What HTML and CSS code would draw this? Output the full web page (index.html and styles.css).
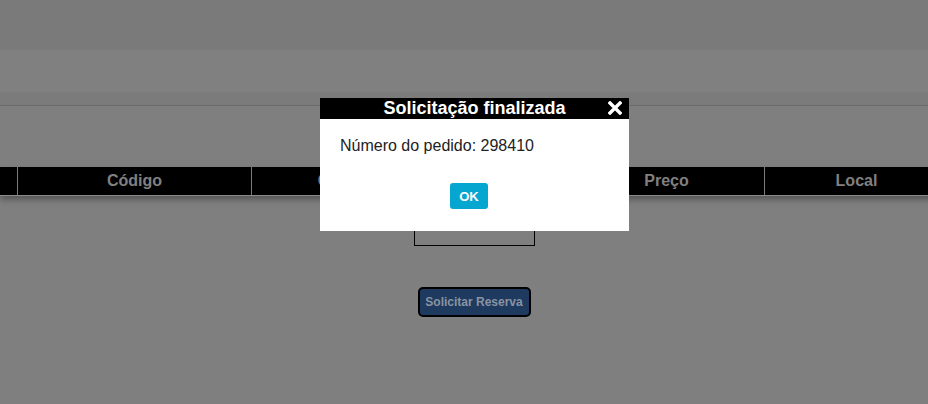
FILE: index.html
```html
<!DOCTYPE html>
<html lang="pt-BR">
<head>
<meta charset="utf-8">
<title>Reserva</title>
<link rel="stylesheet" href="styles.css">
</head>
<body>
<div class="page">
  <div class="top-band"></div>
  <div class="nav-band"></div>
  <div class="sub-band"></div>

  <div class="table-head">
    <div class="col col-check"></div>
    <div class="col col-code">Código</div>
    <div class="col col-a">Cor</div>
    <div class="col col-b">Cidade</div>
    <div class="col col-price">Preço</div>
    <div class="col col-local">Local</div>
  </div>

  <div class="empty-box"></div>

  <div class="actions">
    <button class="btn-reserve" type="button">Solicitar Reserva</button>
  </div>

  <div class="modal">
    <div class="modal-title">
      <span>Solicitação finalizada</span>
      <svg class="close" width="14" height="14" viewBox="0 0 14 14" aria-hidden="true">
        <path d="M2 2 L12 12 M12 2 L2 12" stroke="#fff" stroke-width="3.4" stroke-linecap="square"/>
      </svg>
    </div>
    <div class="modal-body">Número do pedido: 298410</div>
    <div class="modal-footer">
      <button class="btn-ok" type="button">OK</button>
    </div>
  </div>
</div>
</body>
</html>
```
FILE: styles.css
```css
html, body {
  margin: 0;
  padding: 0;
  overflow: hidden;
  background: #7f7f7f;
  font-family: "Liberation Sans", Arial, sans-serif;
}

.page {
  position: relative;
  width: 948px;
  height: 404px;
  background: #7f7f7f;
}

.top-band {
  height: 50px;
  background: #7a7a7a;
}

.nav-band {
  height: 42px;
  background: #808080;
}

.sub-band {
  height: 13px;
  background: #7b7b7b;
  border-bottom: 1px solid #6a6a6a;
}

.table-head {
  margin-top: 61px;
  display: flex;
  height: 28px;
  background: #000;
  border-bottom: 1px solid #8a8a8a;
  box-shadow: 0 4px 6px rgba(0, 0, 0, 0.3);
}

.col {
  box-sizing: border-box;
  display: flex;
  align-items: center;
  justify-content: center;
  color: #808080;
  font-weight: bold;
  font-size: 16px;
  border-right: 1px solid #7a7a7a;
}

.col-check { width: 18px; }
.col-code { width: 234px; }
.col-a { width: 160px; }
.col-b { width: 157px; }
.col-price { width: 196px; }
.col-local { width: 183px; border-right: none; }

.empty-box {
  box-sizing: border-box;
  width: 121px;
  height: 40px;
  margin: 10px auto 0;
  border: 1px solid #000;
}

.actions {
  display: flex;
  justify-content: center;
  margin-top: 41px;
}

.btn-reserve {
  box-sizing: border-box;
  width: 113px;
  height: 30px;
  background: #1e3a5f;
  border: 2px solid #000;
  border-radius: 5px;
  color: #8a93a2;
  font-family: "Liberation Sans", Arial, sans-serif;
  font-weight: bold;
  font-size: 12px;
  padding: 0;
}

.modal {
  position: absolute;
  left: 320px;
  top: 98px;
  width: 309px;
  background: #fff;
}

.modal-title {
  position: relative;
  height: 21px;
  background: #000;
  color: #fff;
  font-weight: bold;
  font-size: 18px;
  line-height: 21px;
  text-align: center;
}

.close {
  position: absolute;
  right: 7px;
  top: 3px;
}

.modal-body {
  padding: 17px 20px 0;
  font-size: 16px;
  line-height: 19px;
  color: #222;
}

.modal-footer {
  display: flex;
  justify-content: center;
  padding: 28px 11px 22px 0;
}

.btn-ok {
  width: 38px;
  height: 26px;
  border: none;
  border-radius: 3px;
  background: #05a6cf;
  color: #fff;
  font-family: "Liberation Sans", Arial, sans-serif;
  font-weight: bold;
  font-size: 13px;
  padding: 0;
}
```
